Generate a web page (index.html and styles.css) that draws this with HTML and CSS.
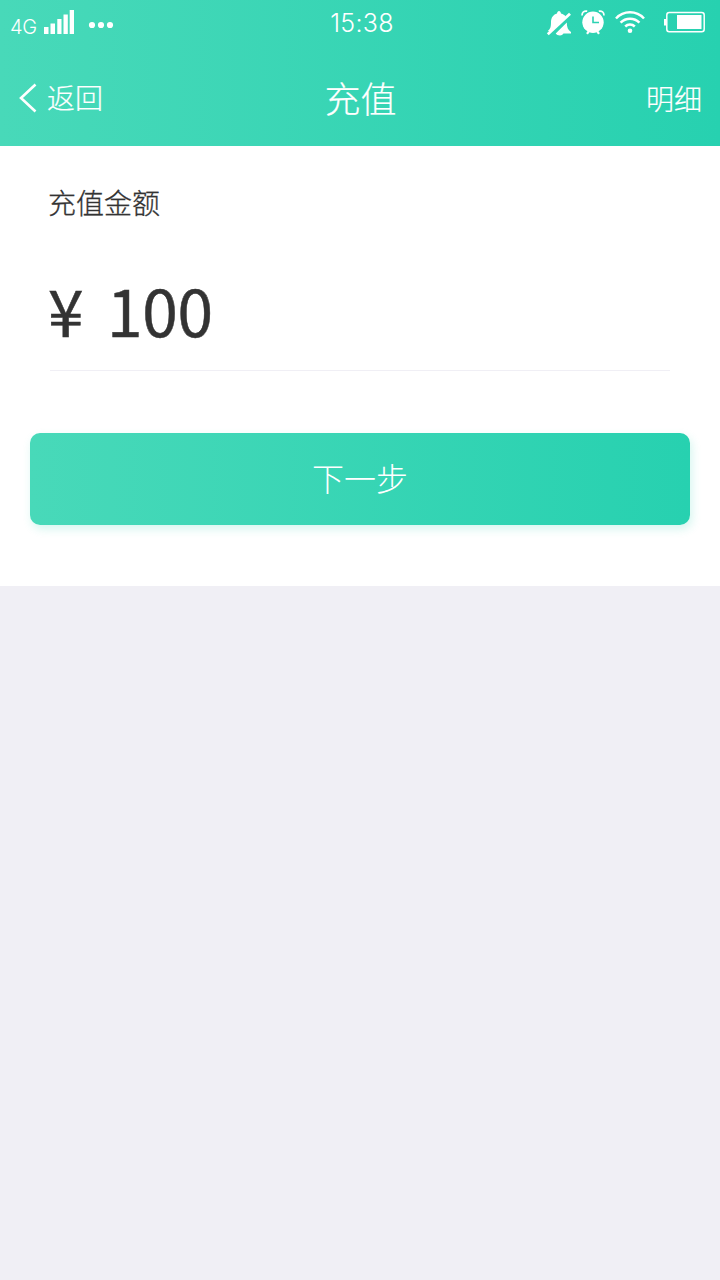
FILE: index.html
```html
<!DOCTYPE html>
<html lang="zh-CN">
<head>
<meta charset="utf-8">
<title>充值</title>
<link rel="stylesheet" href="styles.css">
</head>
<body>
<header class="header">
  <div class="status">
    <div class="status-left">
      <span class="network">4G</span>
      <svg class="signal" width="30" height="24" viewBox="0 0 30 24" fill="currentColor"><path d="M0 17h4.500v7H0zM6.500 13.500H11V24H6.500zM13.300 9h4.200v15h-4.200zM19.500 4.500h4.300V24h-4.300zM25.700 0H30v24h-4.300z"/></svg>
      <svg class="dots" width="26" height="8" viewBox="0 0 26 8" fill="currentColor"><circle cx="4" cy="4" r="3.100"/><circle cx="13" cy="4" r="3.100"/><circle cx="22" cy="4" r="3.100"/></svg>
    </div>
    <span class="time">15:38</span>
    <div class="status-right">
      <svg class="muted" width="26" height="26" viewBox="0 0 26 26" fill="currentColor"><path d="M2 20.500c2.500-1.500 3-4 3-8.500C5 7.500 7.500 4.500 11 3.500 11.200 2 12 1 13 1s1.800 1 2 2.500c2 .5 3.700 1.500 4.800 3L4 22.500z"/><path d="M1.800 24.200 24 3.800" stroke="currentColor" stroke-width="2.800"/><path d="M20.800 12.500c0 4.500 1 7.500 4.200 9.500v1.500h-7.500c-.8 1.300-2 2-3.500 2-2 0-3.500-.8-4.300-2z"/></svg>
      <svg class="alarm" width="24" height="26" viewBox="0 0 24 26" fill="none" stroke="currentColor"><circle cx="12" cy="13.200" r="10.700" fill="currentColor" stroke="none"/><path stroke-width="1.700" d="M1 6.500C1 3 3 1.700 6.200 2.200M23 6.500C23 3 21 1.700 17.800 2.200"/><path stroke-width="2.200" d="m8 22-2 2.800M16 22l2 2.800"/><path class="alarm-hands" stroke-width="1.600" d="M12 7.500v6h6"/></svg>
      <svg class="wifi" width="30" height="24" viewBox="0 0 30 24" fill="none" stroke="currentColor" stroke-width="2.500"><path d="M1 8.500C8.500.300 21.500.300 29 8.500M5.600 12.700c5-5.300 13.800-5.300 18.800 0M10.200 16.500c2.600-2.600 7-2.600 9.600 0"/><circle cx="15" cy="20.800" r="2.300" fill="currentColor" stroke="none"/></svg>
      <svg class="battery" width="41" height="22" viewBox="0 0 41 22"><rect x="2.800" y="1.600" width="37.400" height="19.200" rx="2.500" fill="none" stroke="currentColor" stroke-width="1.500"/><path fill="currentColor" d="M0 8h2.500v6.500H0zM13 4h24.500v14H13z"/></svg>
    </div>
  </div>
  <nav class="nav">
    <a class="back"><svg width="18" height="30" viewBox="0 0 18 30" fill="none" stroke="currentColor" stroke-width="2.600"><path d="M16.500 1.500 2 15l14.500 13.500"/></svg><span>返回</span></a>
    <h1 class="title">充值</h1>
    <a class="detail">明细</a>
  </nav>
</header>
<main class="panel">
  <div class="label">充值金额</div>
  <div class="amount"><span class="currency">¥</span><span class="value">100</span></div>
  <button class="next">下一步</button>
</main>
</body>
</html>
```
FILE: styles.css
```css
* { box-sizing: border-box; }
body {
  margin: 0;
  min-height: 1280px;
  background: #f0eff5;
  color: #333;
  font-family: "Noto Sans CJK SC", sans-serif;
  font-weight: 300;
}
svg { display: block; flex: none; }
.header {
  height: 146px;
  color: #fff;
  background: linear-gradient(90deg, #48d9b9, #27d1b0);
}
.status, .nav {
  display: grid;
  grid-template-columns: 1fr auto 1fr;
}
.status {
  height: 46px;
  font-family: Inter, sans-serif;
}
.status-left { display: flex; align-items: flex-start; padding-left: 10px; }
.network { width: 34px; padding-top: 15px; font-size: 20px; line-height: 24px; letter-spacing: -0.3px; }
.signal { margin-top: 10px; }
.dots { margin: 21px 0 0 14px; }
.time { padding: 8px 0 0 4px; font-size: 25px; line-height: 30px; letter-spacing: 0.3px; }
.status-right { display: flex; justify-content: flex-end; padding-right: 15px; }
.muted { margin-top: 10px; }
.alarm { margin: 9px 0 0 9px; }
.alarm-hands { stroke: #2cd2b2; }
.wifi { margin: 10px 0 0 10px; }
.battery { margin: 11px 0 0 19px; }
.nav { height: 100px; padding: 0 18px 0 19px; }
.back { display: flex; align-items: flex-start; font-size: 28px; line-height: 40px; padding-top: 31px; }
.back svg { margin: 6px 10px 0 0; }
.title { margin: 0; padding-top: 25px; font-size: 36px; line-height: 52px; font-weight: 300; }
.detail { justify-self: end; padding-top: 32px; font-size: 28px; line-height: 40px; }
.back span, .title, .detail { -webkit-text-stroke: 0.2px currentColor; }
.panel { height: 440px; padding: 36px 30px 0; background: #fff; }
.label { padding-left: 18px; font-size: 28px; line-height: 40px; -webkit-text-stroke: 0.3px currentColor; }
.amount {
  display: flex;
  height: 149px;
  margin: 0 20px;
  padding-top: 39px;
  border-bottom: 1px solid #f0eff5;
  font-size: 64px;
  font-weight: 400;
  line-height: 96px;
  -webkit-text-stroke: 0.5px currentColor;
}
.currency { width: 59px; margin-left: -2px; }
.value { letter-spacing: -0.3px; }
.next {
  display: block;
  width: 100%;
  height: 92px;
  margin-top: 62px;
  padding: 0 0 4px;
  border: 0;
  border-radius: 10px;
  background: linear-gradient(90deg, #48d9b9, #27d1b0);
  box-shadow: 2px 4px 10px rgba(39, 209, 176, .2);
  color: #fff;
  font: 300 32px/88px "Noto Sans CJK SC", sans-serif;
}
```
